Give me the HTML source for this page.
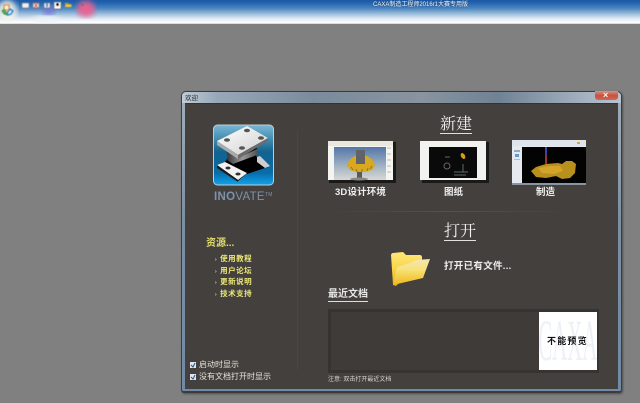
<!DOCTYPE html>
<html><head><meta charset="utf-8">
<style>
html,body{margin:0;padding:0;background:#808080;width:640px;height:403px;overflow:hidden;}
body{position:relative;font-family:"Liberation Sans","Noto Sans CJK SC",sans-serif;}
#w{position:absolute;left:0;top:0;width:640px;height:403px;overflow:hidden;filter:blur(.3px);}
.a{position:absolute;white-space:nowrap;}
svg{position:absolute;overflow:hidden;}
.l{left:215px;font-size:7.5px;line-height:10px;color:#ece878;letter-spacing:.5px;font-weight:bold;}
.l span{font-size:5px;margin-right:3px;}
.c{left:199px;font-size:8px;line-height:10px;color:#e6e4dc;}
.h{font-size:16px;line-height:16px;font-family:'Liberation Serif','Noto Serif CJK SC',serif;color:#f0f0f0;border-bottom:1px solid #e0e0e0;}
.t{top:187px;font-size:9.5px;line-height:12px;color:#eee;font-weight:bold;}
</style></head><body><div id="w">
<div class="a" style="left:0;top:0;width:640px;height:24px;background:linear-gradient(180deg,#1b58a6 0,#2464ae 12%,#4d86c0 35%,#9dbedb 58%,#dbe7f1 76%,#f8fbfd 90%,#fff 96%,#b8b8b8 100%);"></div>
<svg style="left:0;top:0" width="640" height="24" viewBox="0 0 640 24">
<defs><filter id="b3"><feGaussianBlur stdDeviation="3"/></filter><filter id="b1"><feGaussianBlur stdDeviation=".4"/></filter></defs>
<ellipse cx="7" cy="11" rx="10" ry="11" fill="#f4f4ec" opacity=".9" filter="url(#b3)"/>
<ellipse cx="49" cy="10" rx="6" ry="5" fill="#7a6fd8" opacity=".85" filter="url(#b3)"/>
<ellipse cx="46" cy="20" rx="14" ry="4" fill="#eef3f7" opacity=".9" filter="url(#b3)"/>
<ellipse cx="86" cy="9" rx="9" ry="8" fill="#f0608e" opacity=".95" filter="url(#b3)"/>
<g filter="url(#b1)">
<path d="M4 5h5v5H4z" fill="#f8f0e0" stroke="#e08a30" stroke-width="1.3"/>
<path d="M2 11l2-2 2 3 1 3-3-1z" fill="#55b050" stroke="#3f9a48"/>
<path d="M7 13l3-4 3 2-2 3-3 1z" fill="none" stroke="#2a86c8" stroke-width="1.4"/>
<rect x="22" y="3" width="7" height="5" rx="1" fill="#eef1f6" stroke="#6f7f92"/>
<rect x="33" y="3" width="6" height="5" fill="#f4f0f0" stroke="#6f7f92"/><path d="M34 3l4 5M38 3l-4 5" stroke="#d01818"/>
<rect x="44" y="3" width="6" height="5" fill="#eef2f8" stroke="#66788c"/><rect x="46" y="3" width="2" height="4" fill="#2f8fb8"/>
<rect x="54" y="2" width="7" height="7" fill="#fff" stroke="#5e6e80"/><rect x="56" y="3" width="3" height="3" fill="#000"/>
<path d="M65 3h3l1 1h2v3h-6z" fill="#c8a028"/><path d="M65 7l1-2h6l-1 2z" fill="#f0cc40"/>
<rect x="81" y="4.5" width="3" height="1" fill="#666"/>
</g>
</svg>
<div class="a" style="left:373px;top:1px;font-size:6px;line-height:9px;color:#eef3f8;text-shadow:0 0 2px #1d3a60;">CAXA制造工程师2016r1大赛专用版</div>

<!-- window -->
<div class="a" style="left:181px;top:91px;width:441px;height:302px;background:#3c3c3c;border-radius:5px 5px 3px 3px;box-shadow:1px 1px 2px #4e4e4e;"></div>
<div class="a" style="left:182px;top:92px;width:439px;height:299px;border-radius:4px 4px 2px 2px;background:linear-gradient(90deg,#c0ccd6 0,#98a8b8 8%,#7b8b9b 30%,#88949f 55%,#6f8294 72%,#a0aebc 90%,#b8c4d0 100%);"></div>
<div class="a" style="left:182px;top:103px;width:439px;height:288px;border-radius:0 0 2px 2px;background:linear-gradient(180deg,#a0acb8 0,#7c8fa3 40%,#708aa5 100%);"></div>
<div class="a" style="left:185px;top:103px;width:433px;height:1px;background:#333;"></div>
<div class="a" style="left:185px;top:104px;width:433px;height:285px;background:#44403d;"></div>
<div class="a" style="left:185px;top:94px;font-size:6.5px;line-height:9px;color:#20262c;">欢迎</div>
<div class="a" style="left:595px;top:91px;width:23px;height:9px;border-radius:0 0 3px 3px;background:linear-gradient(180deg,#d89484,#c8503e 50%,#cc6a58);"></div>
<div class="a" style="left:603px;top:90px;font-size:9px;line-height:10px;color:#f4f4f4;font-weight:bold;">×</div>

<div class="a" style="left:297px;top:130px;width:1px;height:240px;background:#4a4643;"></div>

<!-- logo -->
<svg style="left:213px;top:124px" width="62" height="64" viewBox="0 0 62 64">
<defs>
<linearGradient id="lg" x1="0" y1="0" x2="0" y2="1"><stop offset="0" stop-color="#7ab8d4"/><stop offset=".45" stop-color="#12638f"/><stop offset=".8" stop-color="#0a6ca8"/><stop offset="1" stop-color="#0ea4ee"/></linearGradient>
<linearGradient id="lw" x1="0" y1="0" x2="1" y2="1"><stop offset="0" stop-color="#fff"/><stop offset="1" stop-color="#cfcfcf"/></linearGradient>
<linearGradient id="lm" x1="0" y1="0" x2="1" y2="0"><stop offset="0" stop-color="#2a2a2a"/><stop offset=".55" stop-color="#9a9a9a"/><stop offset="1" stop-color="#555"/></linearGradient>
</defs>
<rect x="0.5" y="1" width="60" height="60" rx="4" fill="url(#lg)" stroke="#c4ccd0"/>
<path d="M15 26c1 4 0 8-3 12l22 12 21-7-12-11 1-10z" fill="#000"/>
<path d="M12 38l22 11-9 8-21-16z" fill="#000"/>
<path d="M44 33l3-1 10 10-5 2-8-6z" fill="#cfcfcf"/>
<path d="M12 23l13 11 19-9v6l-24 9-6-4c1-4 0-8-2-13z" fill="url(#lm)"/>
<path d="M4 17L34 2l21 12-30 17z" fill="url(#lw)"/>
<path d="M4 17l21 14v4L4 21z" fill="#aaa"/>
<path d="M25 31l30-17v3L25 35z" fill="#6c6c6c"/>
<ellipse cx="34" cy="6.5" rx="3" ry="1.8" fill="#555"/><ellipse cx="14" cy="16" rx="3" ry="1.8" fill="#555"/><ellipse cx="48" cy="14" rx="3" ry="1.8" fill="#555"/><ellipse cx="29" cy="24" rx="3" ry="1.8" fill="#555"/>
<path d="M4 41l8-3 22 11-9 7z" fill="#f2f2f2"/>
<path d="M4 41l21 15v2L4 44z" fill="#1a1a1a"/>
<ellipse cx="15" cy="44" rx="2.6" ry="1.5" fill="#333"/><ellipse cx="25" cy="50" rx="2.6" ry="1.5" fill="#333"/>
</svg>
<div class="a" style="left:214px;top:189px;font-size:11.5px;line-height:13px;color:#7d93ac;letter-spacing:.3px;"><b>INO</b>VATE<span style="font-size:5px;vertical-align:4px;">TM</span></div>

<!-- left links -->
<div class="a" style="left:206px;top:238px;font-size:10px;line-height:12px;color:#dfdc70;font-weight:bold;">资源...</div>
<div class="a l" style="top:254px;"><span>›</span>使用教程</div>
<div class="a l" style="top:266px;"><span>›</span>用户论坛</div>
<div class="a l" style="top:277px;"><span>›</span>更新说明</div>
<div class="a l" style="top:289px;"><span>›</span>技术支持</div>

<div class="a" style="left:190px;top:362px;width:6px;height:6px;background:#dfe6f0;"></div>
<div class="a" style="left:190px;top:374px;width:6px;height:6px;background:#dfe6f0;"></div>
<svg style="left:190px;top:362px" width="6" height="18"><path d="M1 3l2 2 2-4M1 15l2 2 2-4" stroke="#30507c" fill="none"/></svg>
<div class="a c" style="top:360px;">启动时显示</div>
<div class="a c" style="top:372px;">没有文档打开时显示</div>

<!-- headings -->
<div class="a h" style="left:440px;top:117px;">新建</div>
<div class="a h" style="left:444px;top:224px;">打开</div>

<!-- thumbs -->
<svg style="left:327px;top:140px" width="69" height="43" viewBox="0 0 69 43">
<defs><linearGradient id="t1" x1="0" y1="0" x2="0" y2="1"><stop offset="0" stop-color="#5476a8"/><stop offset=".6" stop-color="#a4b4c4"/><stop offset="1" stop-color="#d8d8d4"/></linearGradient></defs>
<rect x="2" y="2" width="67" height="41" fill="#1c1a18"/>
<rect x="1" y="1" width="65" height="39" fill="#f4f4f0"/><rect x="1" y="1" width="65" height="5" fill="#e8e8dc"/>
<rect x="7" y="7" width="52" height="33" fill="url(#t1)"/>
<path d="M30 30h5v8h-5z" fill="#5a5a50"/><ellipse cx="32" cy="39" rx="9" ry="1.5" fill="#8a8a80"/>
<path d="M20 25C22 19 27 15 34 15 41 15 46 19 48 25L46 29C42 33 26 33 22 29Z" fill="#d8a820"/>
<path d="M24 27l2 3M29 29l1 3M35 29l0 3M41 28l-1 3M45 26l-2 3" stroke="#96741a"/>
<rect x="29" y="10" width="9" height="14" fill="#606468"/>
<path d="M60 8h4M60 14h4M60 20h4M60 26h4M60 32h4" stroke="#bbb"/>
</svg>
<svg style="left:420px;top:140px" width="69" height="43" viewBox="0 0 69 43">
<rect x="2" y="2" width="67" height="41" fill="#1c1a18"/>
<rect y="1" width="66" height="39" fill="#f2f2ee"/>
<rect x="9" y="7" width="48" height="31" fill="#0a0a0a"/>
<ellipse cx="43" cy="16" rx="2" ry="3.2" fill="#d4a010" transform="rotate(-30 43 16)"/>
<circle cx="27" cy="26" r="3" fill="none" stroke="#666"/>
<path d="M43 24v8M34 32h14M34 35h12M25 17h5" stroke="#5e6a60"/>
</svg>
<svg style="left:512px;top:139px" width="75" height="46" viewBox="0 0 75 46">
<rect y="1" width="74" height="45" fill="#e6eaf0"/><rect x="0" y="44" width="74" height="2" fill="#8a95a4"/>
<rect y="1" width="74" height="6" fill="#dfe4ec"/><rect x="65" y="3" width="3" height="2" fill="#e0a820"/>
<rect x="10" y="8" width="64" height="36" fill="#030303"/>
<rect x="33" y="8" width="2" height="9" fill="#4040a8"/><rect x="33" y="17" width="2" height="8" fill="#a03030"/>
<path d="M19 32L24 28 34 25 46 24 50 25 54 22 60 22 64 25 63 34 58 39 50 40 44 37 34 39 24 38Z" fill="#b8901e"/>
<path d="M26 29l12-2 10 0 3 5-9 3-12-1z" fill="#d4a42a"/>
<rect x="2" y="11" width="6" height="2" fill="#9ab"/><rect x="3" y="15" width="4" height="3" fill="#5b9ed8"/><rect x="2" y="20" width="6" height="1" fill="#bbb"/>
</svg>
<div class="a t" style="left:335px;letter-spacing:.15px;">3D设计环境</div>
<div class="a t" style="left:444px;">图纸</div>
<div class="a t" style="left:536px;">制造</div>
<div class="a" style="left:325px;top:211px;width:250px;height:1px;background:linear-gradient(90deg,#44403d,#55514e 50%,#44403d);"></div>

<!-- folder -->
<svg style="left:388px;top:249px" width="44" height="38" viewBox="0 0 44 38">
<defs><linearGradient id="f1" x1="0" y1="0" x2="0" y2="1"><stop offset="0" stop-color="#ffe878"/><stop offset=".5" stop-color="#f8d448"/><stop offset="1" stop-color="#e4ae10"/></linearGradient>
<linearGradient id="f2" x1="0" y1="0" x2="0" y2="1"><stop offset="0" stop-color="#f2e6b4"/><stop offset=".4" stop-color="#f8e27a"/><stop offset="1" stop-color="#f0b818"/></linearGradient></defs>
<path d="M3 6c0-1 1-2 2-2l10-1 3 3 14 0c1 0 2 1 2 2v3L8 37 5 36z" fill="url(#f1)"/>
<path d="M9 18l13-4 6-3 14-1-7 19-30 7z" fill="url(#f2)"/>
</svg>
<div class="a" style="left:444px;top:261px;font-size:9.5px;line-height:12px;color:#eee;letter-spacing:.3px;font-weight:bold;">打开已有文件...</div>
<div class="a" style="left:328px;top:289px;font-size:10px;line-height:12px;color:#e8e8e8;border-bottom:1px solid #ddd;font-weight:bold;">最近文档</div>

<!-- recent -->
<div class="a" style="left:328px;top:309px;width:271px;height:64px;background:#363330;"></div>
<div class="a" style="left:331px;top:312px;width:208px;height:58px;background:#3f3b38;"></div>
<div class="a" style="left:539px;top:312px;width:58px;height:58px;background:#fff;overflow:hidden;">
<div class="a" style="left:-52px;top:1px;width:160px;text-align:center;font-size:58px;line-height:56px;font-family:'Liberation Serif',serif;color:#edf0f7;transform:scaleX(.36);">CAXA</div>
<div class="a" style="left:8px;top:23px;font-size:9px;line-height:12px;color:#111;letter-spacing:1.2px;font-weight:bold;">不能预览</div>
</div>
<div class="a" style="left:328px;top:376px;font-size:6px;line-height:9px;color:#d6d6d0;">注意: 双击打开最近文档</div>
</div></body></html>
